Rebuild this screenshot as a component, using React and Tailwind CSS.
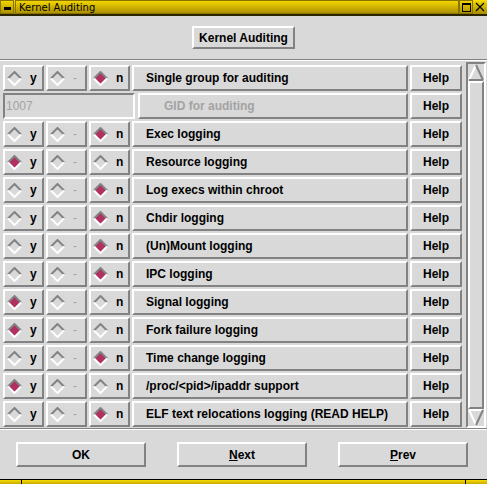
import React from "react";

const raised =
  "border-2 border-t-white border-l-white border-r-[#828282] border-b-[#828282]";
const sunken =
  "border-2 border-t-[#828282] border-l-[#828282] border-r-white border-b-white";

const rows = [
  { label: "Single group for auditing", val: "n" },
  { gid: true },
  { label: "Exec logging", val: "n" },
  { label: "Resource logging", val: "y" },
  { label: "Log execs within chroot", val: "n" },
  { label: "Chdir logging", val: "n" },
  { label: "(Un)Mount logging", val: "n" },
  { label: "IPC logging", val: "n" },
  { label: "Signal logging", val: "y" },
  { label: "Fork failure logging", val: "y" },
  { label: "Time change logging", val: "n" },
  { label: "/proc/<pid>/ipaddr support", val: "y" },
  { label: "ELF text relocations logging (READ HELP)", val: "n" },
];

const Diamond = ({ on }) => (
  <svg width="15" height="15" viewBox="0 0 15 15" className="shrink-0">
    <polygon points="7.5,1 14,7.5 7.5,14 1,7.5" fill={on ? "#b03060" : "#d9d9d9"} />
    <polyline points="1,7.5 7.5,1 14,7.5" fill="none" stroke="#828282" strokeWidth="2" />
    <polyline points="1,7.5 7.5,14 14,7.5" fill="none" stroke="#ffffff" strokeWidth="2" />
  </svg>
);

const Radio = ({ on, text, disabled }) => (
  <div className={`${raised} w-[41px] h-[26px] flex items-center pl-[2px] gap-[8px]`}>
    <Diamond on={on} />
    <span className={disabled ? "text-[#a3a3a3] font-normal" : "text-black"}>{text}</span>
  </div>
);

const Help = () => (
  <div className={`${raised} w-[52px] h-[26px] flex items-center justify-center`}>Help</div>
);

const Row = ({ row }) => {
  if (row.gid) {
    return (
      <div className="flex h-[26px] gap-[2px]">
        <div className={`${sunken} w-[132px] h-[26px] flex items-center pl-[1px] font-normal text-[#a3a3a3]`}>
          1007
        </div>
        <div className={`${raised} ml-[1px] w-[270px] h-[26px] flex items-center pl-[24px] text-[#a3a3a3]`}>
          GID for auditing
        </div>
        <Help />
      </div>
    );
  }
  return (
    <div className="flex h-[26px] gap-[2px]">
      <Radio on={row.val === "y"} text="y" />
      <Radio on={false} text="-" disabled />
      <Radio on={row.val === "n"} text="n" />
      <div className={`${raised} w-[276px] h-[26px] flex items-center pl-[12px] whitespace-nowrap`}>
        {row.label}
      </div>
      <Help />
    </div>
  );
};

const ScrollBar = () => (
  <div className={`${sunken} w-[20px] h-[366px] flex flex-col`}>
    <svg width="16" height="17" viewBox="0 0 16 17" className="shrink-0">
      <polygon points="8,1 15,16 1,16" fill="#d9d9d9" />
      <line x1="8" y1="1" x2="1" y2="16" stroke="#ffffff" strokeWidth="2" />
      <line x1="8" y1="1" x2="15" y2="16" stroke="#828282" strokeWidth="2" />
      <line x1="1" y1="16" x2="15" y2="16" stroke="#828282" strokeWidth="2" />
    </svg>
    <div className={`${raised} flex-1`} />
    <svg width="16" height="17" viewBox="0 0 16 17" className="shrink-0">
      <polygon points="1,1 15,1 8,16" fill="#d9d9d9" />
      <line x1="1" y1="1" x2="15" y2="1" stroke="#ffffff" strokeWidth="2" />
      <line x1="1" y1="1" x2="8" y2="16" stroke="#ffffff" strokeWidth="2" />
      <line x1="15" y1="1" x2="8" y2="16" stroke="#828282" strokeWidth="2" />
    </svg>
  </div>
);

export default function App() {
  return (
    <div
      className="w-[487px] h-[484px] bg-[#d9d9d9] flex flex-col overflow-hidden text-[12px] font-bold text-black"
      style={{ fontFamily: '"Liberation Sans", Arial, sans-serif' }}
    >
      {/* title bar */}
      <div className="h-[14px] flex bg-gradient-to-b from-[#f8dc00] to-[#a88c00]">
        <div className="w-[14px] h-[14px] flex items-end justify-center pb-[3px] border border-[#8a7400]">
          <div className="w-[7px] h-[3px] bg-black" />
        </div>
        <div
          className="flex-1 ml-[1px] border border-[#8a7400] flex items-center pl-[3px] text-[10px] font-normal text-black"
          style={{ fontFamily: '"DejaVu Sans", sans-serif' }}
        >
          Kernel Auditing
        </div>
        <div className="w-[14px] flex items-center justify-center border border-[#8a7400]">
          <div className="w-[9px] h-[9px] border border-black border-t-2" />
        </div>
        <div className="w-[14px] flex items-center justify-center">
          <svg width="10" height="10" viewBox="0 0 10 10">
            <path d="M1 1 L9 9 M9 1 L1 9" stroke="#000" strokeWidth="1.2" />
          </svg>
        </div>
      </div>
      <div className="h-[2px] bg-[#2a2400]" />

      {/* heading */}
      <div className="h-[43px] flex items-center justify-center">
        <div className={`${raised} w-[103px] h-[23px] flex items-center justify-center`}>
          Kernel Auditing
        </div>
      </div>
      <div className="h-[2px] border-t border-t-[#828282] border-b border-b-white" />

      {/* list */}
      <div className="h-[367px] flex pt-[1px]">
        <div className="flex flex-col gap-[2px] pl-[3px] pt-[3px]">
          {rows.map((r, i) => (
            <Row key={i} row={r} />
          ))}
        </div>
        <div className="ml-[4px]">
          <ScrollBar />
        </div>
      </div>
      <div className="h-[2px] border-t border-t-[#828282] border-b border-b-white" />

      {/* buttons */}
      <div className="h-[49px] flex items-center pl-[16px] gap-[31px]">
        <div className={`${raised} w-[130px] h-[25px] flex items-center justify-center`}>OK</div>
        <div className={`${raised} w-[130px] h-[25px] flex items-center justify-center`}>
          <span><span className="underline">N</span>ext</span>
        </div>
        <div className={`${raised} w-[130px] h-[25px] flex items-center justify-center`}>
          <span><span className="underline">P</span>rev</span>
        </div>
      </div>

      {/* bottom frame */}
      <div className="flex-1 border-t border-black flex bg-gradient-to-b from-[#f8dc00] to-[#c8a800]">
        <div className="w-[22px] border-r border-black" />
        <div className="flex-1" />
        <div className="w-[22px] border-l border-black" />
      </div>
    </div>
  );
}
